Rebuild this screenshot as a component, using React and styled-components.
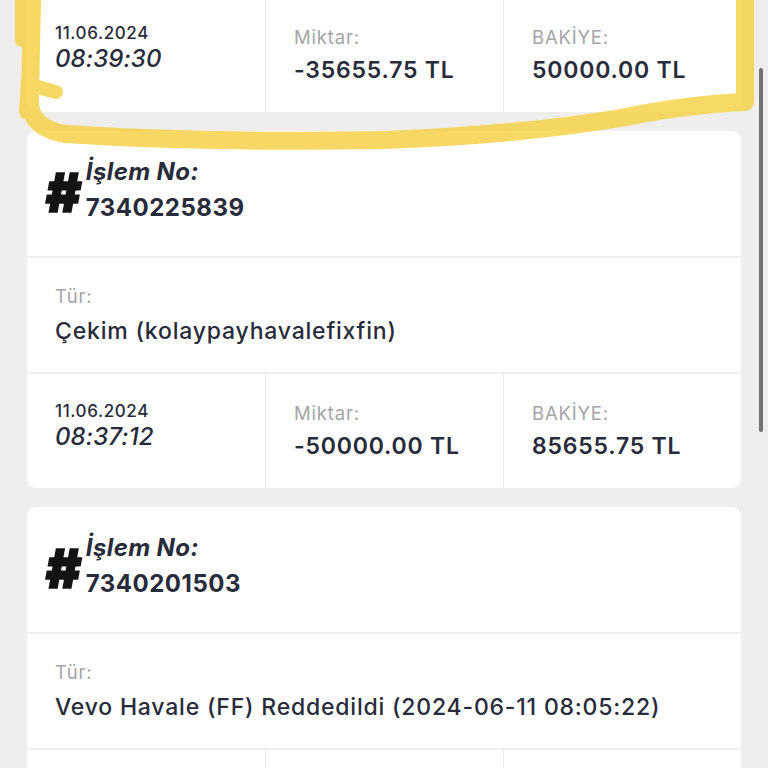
import React from "react";
import styled, { createGlobalStyle } from "styled-components";

const GlobalStyle = createGlobalStyle`
  html, body {
    margin: 0;
    padding: 0;
    overflow: hidden;
    background-color: #efeeed;
  }
  body {
    font-family: Inter, "Noto Sans", sans-serif;
    color: #282b3a;
  }
`;

const Page = styled.main`
  display: flex;
  flex-direction: column;
  gap: 19px;
  padding: 0 27px 40px;
`;

const Card = styled.section`
  background-color: #ffffff;
  border-radius: ${(p) => (p.$clipped ? "0 0 9px 9px" : "9px")};
  overflow: hidden;
`;

const Header = styled.div`
  display: flex;
  align-items: flex-start;
  height: 127px;
  padding: 27px 18px 0;
  box-sizing: border-box;
  border-bottom: 2px solid #eeeeee;
`;

const HashMark = styled.span`
  font-family: Inter, sans-serif;
  font-size: 54px;
  font-weight: 900;
  font-style: italic;
  color: #141414;
  -webkit-text-stroke: 1.5px #141414;
  line-height: 1;
  margin-top: 8px;
  margin-right: 5px;
`;

const TitleBlock = styled.div`
  display: flex;
  flex-direction: column;
`;

const TitleLabel = styled.span`
  font-size: 24px;
  font-weight: 700;
  font-style: italic;
  line-height: 28px;
  letter-spacing: 0.4px;
`;

const TitleNumber = styled.span`
  font-size: 24px;
  font-weight: 700;
  line-height: 28px;
  letter-spacing: 0.5px;
  margin-top: 8px;
`;

const TypeSection = styled.div`
  height: 116px;
  box-sizing: border-box;
  padding: 24px 28px 0;
  border-bottom: 2px solid #eeeeee;
`;

const Label = styled.div`
  font-size: 18.5px;
  line-height: 28px;
  letter-spacing: 0.8px;
  color: #a4a4a6;
  margin-bottom: ${(p) => p.$gap || 5}px;
`;

const TypeValue = styled.div`
  font-size: 23px;
  font-weight: 500;
  line-height: 28px;
  letter-spacing: 0.8px;
`;

const StatsRow = styled.div`
  display: grid;
  grid-template-columns: repeat(3, 1fr);
  height: ${(p) => p.$height || 114}px;
`;

const StatCell = styled.div`
  padding: ${(p) => p.$top || 25}px 28px 0;
  border-left: ${(p) => (p.$first ? "none" : "1px solid #ebebeb")};
`;

const DateText = styled.div`
  font-size: 17px;
  font-weight: 500;
  line-height: 24px;
  letter-spacing: 0.6px;
`;

const TimeText = styled.div`
  font-size: 24px;
  font-weight: 500;
  font-style: italic;
  line-height: 28px;
  letter-spacing: 0.1px;
`;

const Value = styled.div`
  font-size: 23px;
  font-weight: 600;
  line-height: 28px;
  letter-spacing: 0.8px;
`;

const Scrollbar = styled.div`
  position: fixed;
  right: 5px;
  top: 68px;
  width: 4px;
  height: 364px;
  border-radius: 2px;
  background-color: #727272;
`;

const Highlight = styled.svg`
  position: fixed;
  top: 0;
  left: 0;
  pointer-events: none;
`;

const transactions = [
  {
    id: null,
    date: "11.06.2024",
    time: "08:39:30",
    amount: "-35655.75 TL",
    balance: "50000.00 TL",
  },
  {
    id: "7340225839",
    type: "Çekim (kolaypayhavalefixfin)",
    date: "11.06.2024",
    time: "08:37:12",
    amount: "-50000.00 TL",
    balance: "85655.75 TL",
  },
  {
    id: "7340201503",
    type: "Vevo Havale (FF) Reddedildi (2024-06-11 08:05:22)",
    date: "11.06.2024",
    time: "08:05:22",
    amount: "0.00 TL",
    balance: "85655.75 TL",
  },
];

const Stats = ({ tx, clipped }) => (
  <StatsRow $height={clipped ? 112 : 114}>
    <StatCell $first $top={clipped ? 21 : 25}>
      <DateText>{tx.date}</DateText>
      <TimeText>{tx.time}</TimeText>
    </StatCell>
    <StatCell $top={clipped ? 23 : 25}>
      <Label>Miktar:</Label>
      <Value>{tx.amount}</Value>
    </StatCell>
    <StatCell $top={clipped ? 23 : 25}>
      <Label>BAKİYE:</Label>
      <Value>{tx.balance}</Value>
    </StatCell>
  </StatsRow>
);

const App = () => {
  return (
    <>
      <GlobalStyle />
      <Page>
        {transactions.map((tx, i) =>
          tx.id ? (
            <Card key={i}>
              <Header>
                <HashMark>#</HashMark>
                <TitleBlock>
                  <TitleLabel>İşlem No:</TitleLabel>
                  <TitleNumber>{tx.id}</TitleNumber>
                </TitleBlock>
              </Header>
              <TypeSection>
                <Label $gap={7}>Tür:</Label>
                <TypeValue>{tx.type}</TypeValue>
              </TypeSection>
              <Stats tx={tx} />
            </Card>
          ) : (
            <Card key={i} $clipped>
              <Stats tx={tx} clipped />
            </Card>
          )
        )}
      </Page>
      <Highlight width="768" height="170" viewBox="0 0 768 170">
        <g
          opacity="0.8"
          fill="none"
          stroke="#f5cf3f"
          strokeLinecap="round"
          strokeLinejoin="round"
        >
          <path
            d="M32 -5 L30 100 Q29 128 66 134 Q200 143 384 140 Q520 135 620 118 Q690 104 745 102 L745 -5"
            strokeWidth="18"
          />
          <path d="M34 -5 L32 60 M22 -5 L22 40" strokeWidth="14" />
          <path d="M28 80 L26 112 M34 86 L56 92" strokeWidth="14" />
        </g>
      </Highlight>
      <Scrollbar />
    </>
  );
};

export default App;
